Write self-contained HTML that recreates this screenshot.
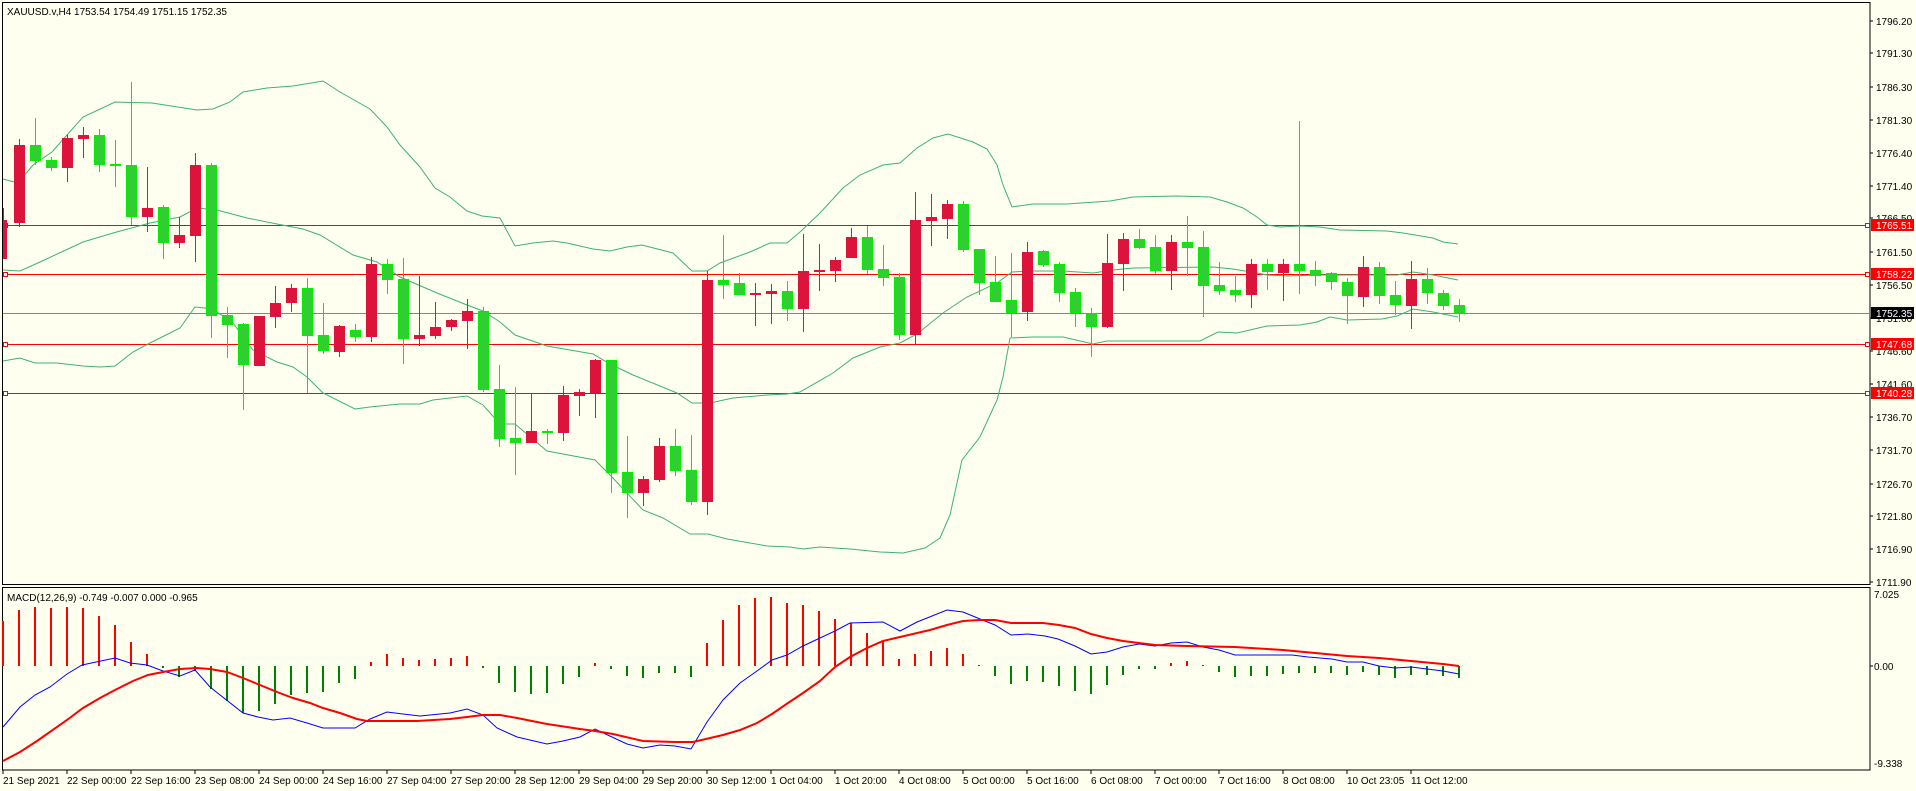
<!DOCTYPE html>
<html><head><meta charset="utf-8"><style>
html,body{margin:0;padding:0;background:#fffff0;}
svg{display:block;}
text{font-family:"Liberation Sans",sans-serif;font-size:10px;}
</style></head><body>
<svg width="1916" height="791" viewBox="0 0 1916 791" xmlns="http://www.w3.org/2000/svg" shape-rendering="crispEdges">
<rect width="1916" height="791" fill="#fffff0"/>
<!-- frames -->
<rect x="2.5" y="2.5" width="1867.5" height="582" fill="none" stroke="#000"/>
<rect x="2.5" y="587.5" width="1867.5" height="182.5" fill="none" stroke="#000"/>

<!-- horizontal lines -->
<line x1="3" y1="313.5" x2="1870" y2="313.5" stroke="#778899"/>
<g stroke="#ff0000">
<line x1="3" y1="225.5" x2="1870" y2="225.5"/>
<line x1="3" y1="274.5" x2="1870" y2="274.5"/>
<line x1="3" y1="344.5" x2="1870" y2="344.5"/>
<line x1="3" y1="393.5" x2="1870" y2="393.5"/>
<rect x="3.5" y="223.5" width="4" height="4" fill="#fff"/>
<rect x="3.5" y="272.5" width="4" height="4" fill="#fff"/>
<rect x="3.5" y="342.5" width="4" height="4" fill="#fff"/>
<rect x="3.5" y="391.5" width="4" height="4" fill="#fff"/>
<rect x="1865.5" y="223.5" width="4" height="4" fill="#fff"/>
<rect x="1865.5" y="272.5" width="4" height="4" fill="#fff"/>
<rect x="1865.5" y="342.5" width="4" height="4" fill="#fff"/>
<rect x="1865.5" y="391.5" width="4" height="4" fill="#fff"/>
</g>

<!-- bollinger bands -->
<g fill="none" stroke="#3cb371" stroke-width="1" shape-rendering="auto">
<polyline points="3,179 18,183 33,165 52,152 67,135 83,117 115,102 152,103 197,110 213,109 230,102 243,92 267,88 293,86 323,81 340,92 370,109 387,127 400,145 420,167 435,188 450,197 467,211 482,216 500,218 515,246 533,243 553,241 567,243 593,249 610,251 627,247 642,245 673,253 692,271 707,271 720,263 750,252 770,243 787,243 800,232 820,213 843,188 860,175 883,165 900,163 917,148 933,138 948,134 973,142 987,149 997,165 1003,185 1012,207 1033,204 1067,204 1110,201 1133,197 1177,196 1210,197 1227,202 1243,208 1257,217 1267,225 1280,227 1300,226 1320,227 1340,230 1387,231 1403,233 1433,238 1443,242 1458,244"/>
<polyline points="3,270 20,271 40,262 83,242 113,233 150,223 180,217 197,208 217,210 247,218 277,224 303,229 320,235 353,255 377,262 400,277 437,293 467,305 483,311 500,322 515,335 547,346 593,354 610,364 633,375 677,393 692,403 710,403 733,398 767,395 787,394 800,392 833,373 853,358 880,347 900,343 917,334 943,313 967,297 997,283 1012,272 1033,271 1063,271 1093,273 1113,270 1133,268 1213,267 1233,269 1257,273 1267,275 1287,276 1320,275 1397,275 1413,272 1433,275 1458,280"/>
<polyline points="3,361 20,358 35,363 57,363 83,366 100,367 115,366 133,352 150,343 180,328 195,307 205,308 217,312 233,323 253,350 277,362 293,367 307,377 323,393 355,409 370,407 400,404 420,404 433,400 467,396 483,405 500,424 515,424 547,451 595,460 612,477 643,510 663,518 690,534 708,534 727,539 767,546 790,547 803,549 820,547 850,549 880,552 903,553 925,548 940,538 950,515 962,460 980,437 997,400 1003,377 1010,338 1033,337 1063,337 1093,344 1107,341 1200,341 1218,332 1237,333 1267,326 1300,325 1317,322 1330,317 1347,320 1382,319 1397,316 1413,309 1433,312 1458,317"/>
</g>

<!-- candles: red -->
<g stroke="#dc143c" fill="#dc143c">
<line x1="3.5" y1="208" x2="3.5" y2="259"/><rect x="3" y="220" width="4" height="39" stroke="none"/>
<line x1="19.5" y1="139" x2="19.5" y2="227"/><rect x="14" y="145" width="11" height="78" stroke="none"/>
<line x1="67.5" y1="135" x2="67.5" y2="182"/><rect x="62" y="138" width="11" height="30" stroke="none"/>
<line x1="83.5" y1="127" x2="83.5" y2="158"/><rect x="78" y="135" width="11" height="4" stroke="none"/>
<line x1="147.5" y1="167" x2="147.5" y2="232"/><rect x="142" y="208" width="11" height="9" stroke="none"/>
<line x1="179.5" y1="217" x2="179.5" y2="248"/><rect x="174" y="235" width="11" height="8" stroke="none"/>
<line x1="195.5" y1="153" x2="195.5" y2="262"/><rect x="190" y="165" width="11" height="71" stroke="none"/>
<line x1="259.5" y1="316" x2="259.5" y2="366"/><rect x="254" y="316" width="11" height="50" stroke="none"/>
<line x1="275.5" y1="286" x2="275.5" y2="328"/><rect x="270" y="303" width="11" height="14" stroke="none"/>
<line x1="291.5" y1="284" x2="291.5" y2="312"/><rect x="286" y="288" width="11" height="15" stroke="none"/>
<line x1="339.5" y1="325" x2="339.5" y2="357"/><rect x="334" y="326" width="11" height="26" stroke="none"/>
<line x1="371.5" y1="257" x2="371.5" y2="342"/><rect x="366" y="264" width="11" height="73" stroke="none"/>
<line x1="419.5" y1="276" x2="419.5" y2="346"/><rect x="414" y="335" width="11" height="4" stroke="none"/>
<line x1="435.5" y1="302" x2="435.5" y2="339"/><rect x="430" y="327" width="11" height="9" stroke="none"/>
<line x1="451.5" y1="319" x2="451.5" y2="331"/><rect x="446" y="320" width="11" height="7" stroke="none"/>
<line x1="467.5" y1="299" x2="467.5" y2="349"/><rect x="462" y="311" width="11" height="10" stroke="none"/>
<line x1="531.5" y1="393" x2="531.5" y2="443"/><rect x="526" y="431" width="11" height="12" stroke="none"/>
<line x1="563.5" y1="386" x2="563.5" y2="441"/><rect x="558" y="395" width="11" height="38" stroke="none"/>
<line x1="579.5" y1="389" x2="579.5" y2="416"/><rect x="574" y="392" width="11" height="4" stroke="none"/>
<line x1="595.5" y1="359" x2="595.5" y2="418"/><rect x="590" y="360" width="11" height="33" stroke="none"/>
<line x1="643.5" y1="476" x2="643.5" y2="506"/><rect x="638" y="479" width="11" height="14" stroke="none"/>
<line x1="659.5" y1="438" x2="659.5" y2="482"/><rect x="654" y="446" width="11" height="34" stroke="none"/>
<line x1="707.5" y1="271" x2="707.5" y2="515"/><rect x="702" y="280" width="11" height="222" stroke="none"/>
<line x1="755.5" y1="283" x2="755.5" y2="326"/><rect x="750" y="293" width="11" height="2" stroke="none"/>
<line x1="771.5" y1="284" x2="771.5" y2="324"/><rect x="766" y="291" width="11" height="3" stroke="none"/>
<line x1="803.5" y1="234" x2="803.5" y2="332"/><rect x="798" y="271" width="11" height="38" stroke="none"/>
<line x1="819.5" y1="244" x2="819.5" y2="291"/><rect x="814" y="270" width="11" height="2" stroke="none"/>
<line x1="835.5" y1="257" x2="835.5" y2="282"/><rect x="830" y="260" width="11" height="11" stroke="none"/>
<line x1="851.5" y1="228" x2="851.5" y2="258"/><rect x="846" y="237" width="11" height="21" stroke="none"/>
<line x1="915.5" y1="192" x2="915.5" y2="344"/><rect x="910" y="220" width="11" height="115" stroke="none"/>
<line x1="931.5" y1="194" x2="931.5" y2="246"/><rect x="926" y="217" width="11" height="4" stroke="none"/>
<line x1="947.5" y1="200" x2="947.5" y2="239"/><rect x="942" y="204" width="11" height="15" stroke="none"/>
<line x1="1027.5" y1="242" x2="1027.5" y2="321"/><rect x="1022" y="252" width="11" height="60" stroke="none"/>
<line x1="1107.5" y1="234" x2="1107.5" y2="328"/><rect x="1102" y="263" width="11" height="64" stroke="none"/>
<line x1="1123.5" y1="233" x2="1123.5" y2="291"/><rect x="1118" y="239" width="11" height="25" stroke="none"/>
<line x1="1171.5" y1="235" x2="1171.5" y2="290"/><rect x="1166" y="242" width="11" height="29" stroke="none"/>
<line x1="1251.5" y1="259" x2="1251.5" y2="308"/><rect x="1246" y="264" width="11" height="31" stroke="none"/>
<line x1="1283.5" y1="259" x2="1283.5" y2="301"/><rect x="1278" y="264" width="11" height="9" stroke="none"/>
<line x1="1363.5" y1="256" x2="1363.5" y2="307"/><rect x="1358" y="267" width="11" height="30" stroke="none"/>
<line x1="1411.5" y1="261" x2="1411.5" y2="329"/><rect x="1406" y="279" width="11" height="27" stroke="none"/>
</g>
<!-- candles: green -->
<g stroke="#00ee00">
<g>
<line x1="35.5" y1="118" x2="35.5" y2="165"/>
<line x1="51.5" y1="157" x2="51.5" y2="171"/>
<line x1="99.5" y1="129" x2="99.5" y2="172"/>
<line x1="115.5" y1="140" x2="115.5" y2="187"/>
<line x1="131.5" y1="82" x2="131.5" y2="225"/>
<line x1="163.5" y1="205" x2="163.5" y2="259"/>
<line x1="211.5" y1="163" x2="211.5" y2="338"/>
<line x1="227.5" y1="307" x2="227.5" y2="358"/>
<line x1="243.5" y1="323" x2="243.5" y2="410"/>
<line x1="307.5" y1="278" x2="307.5" y2="393"/>
<line x1="323.5" y1="303" x2="323.5" y2="354"/>
<line x1="355.5" y1="324" x2="355.5" y2="342"/>
<line x1="387.5" y1="259" x2="387.5" y2="294"/>
<line x1="403.5" y1="258" x2="403.5" y2="364"/>
<line x1="483.5" y1="307" x2="483.5" y2="392"/>
<line x1="499.5" y1="365" x2="499.5" y2="447"/>
<line x1="515.5" y1="387" x2="515.5" y2="475"/>
<line x1="547.5" y1="429" x2="547.5" y2="444"/>
<line x1="611.5" y1="360" x2="611.5" y2="493"/>
<line x1="627.5" y1="436" x2="627.5" y2="518"/>
<line x1="675.5" y1="429" x2="675.5" y2="476"/>
<line x1="691.5" y1="435" x2="691.5" y2="505"/>
<line x1="723.5" y1="235" x2="723.5" y2="299"/>
<line x1="739.5" y1="273" x2="739.5" y2="295"/>
<line x1="787.5" y1="281" x2="787.5" y2="321"/>
<line x1="867.5" y1="226" x2="867.5" y2="274"/>
<line x1="883.5" y1="245" x2="883.5" y2="286"/>
<line x1="899.5" y1="273" x2="899.5" y2="340"/>
<line x1="963.5" y1="201" x2="963.5" y2="252"/>
<line x1="979.5" y1="249" x2="979.5" y2="295"/>
<line x1="995.5" y1="256" x2="995.5" y2="302"/>
<line x1="1011.5" y1="253" x2="1011.5" y2="337"/>
<line x1="1043.5" y1="250" x2="1043.5" y2="267"/>
<line x1="1059.5" y1="262" x2="1059.5" y2="302"/>
<line x1="1075.5" y1="288" x2="1075.5" y2="327"/>
<line x1="1091.5" y1="308" x2="1091.5" y2="357"/>
<line x1="1139.5" y1="229" x2="1139.5" y2="249"/>
<line x1="1155.5" y1="235" x2="1155.5" y2="274"/>
<line x1="1187.5" y1="216" x2="1187.5" y2="276"/>
<line x1="1203.5" y1="231" x2="1203.5" y2="317"/>
<line x1="1219.5" y1="262" x2="1219.5" y2="295"/>
<line x1="1235.5" y1="276" x2="1235.5" y2="302"/>
<line x1="1267.5" y1="259" x2="1267.5" y2="290"/>
<line x1="1299.5" y1="121" x2="1299.5" y2="294"/>
<line x1="1315.5" y1="261" x2="1315.5" y2="286"/>
<line x1="1331.5" y1="272" x2="1331.5" y2="290"/>
<line x1="1347.5" y1="278" x2="1347.5" y2="324"/>
<line x1="1379.5" y1="262" x2="1379.5" y2="304"/>
<line x1="1395.5" y1="281" x2="1395.5" y2="315"/>
<line x1="1427.5" y1="268" x2="1427.5" y2="304"/>
<line x1="1443.5" y1="290" x2="1443.5" y2="310"/>
<line x1="1459.5" y1="299" x2="1459.5" y2="322"/>
</g>
<g fill="#32cd32">
<rect x="30.5" y="145.5" width="10" height="15"/>
<rect x="46.5" y="160.5" width="10" height="7"/>
<rect x="94.5" y="135.5" width="10" height="29"/>
<rect x="110.5" y="164.5" width="10" height="1"/>
<rect x="126.5" y="165.5" width="10" height="51"/>
<rect x="158.5" y="207.5" width="10" height="35"/>
<rect x="206.5" y="165.5" width="10" height="150"/>
<rect x="222.5" y="315.5" width="10" height="9"/>
<rect x="238.5" y="324.5" width="10" height="40"/>
<rect x="302.5" y="288.5" width="10" height="47"/>
<rect x="318.5" y="335.5" width="10" height="15"/>
<rect x="350.5" y="330.5" width="10" height="6"/>
<rect x="382.5" y="264.5" width="10" height="15"/>
<rect x="398.5" y="279.5" width="10" height="59"/>
<rect x="478.5" y="311.5" width="10" height="78"/>
<rect x="494.5" y="389.5" width="10" height="49"/>
<rect x="510.5" y="438.5" width="10" height="4"/>
<rect x="542.5" y="431.5" width="10" height="1"/>
<rect x="606.5" y="360.5" width="10" height="112"/>
<rect x="622.5" y="472.5" width="10" height="20"/>
<rect x="670.5" y="446.5" width="10" height="24"/>
<rect x="686.5" y="470.5" width="10" height="31"/>
<rect x="718.5" y="280.5" width="10" height="4"/>
<rect x="734.5" y="283.5" width="10" height="11"/>
<rect x="782.5" y="291.5" width="10" height="17"/>
<rect x="862.5" y="237.5" width="10" height="32"/>
<rect x="878.5" y="269.5" width="10" height="8"/>
<rect x="894.5" y="277.5" width="10" height="57"/>
<rect x="958.5" y="204.5" width="10" height="45"/>
<rect x="974.5" y="249.5" width="10" height="33"/>
<rect x="990.5" y="282.5" width="10" height="19"/>
<rect x="1006.5" y="300.5" width="10" height="12"/>
<rect x="1038.5" y="251.5" width="10" height="13"/>
<rect x="1054.5" y="264.5" width="10" height="28"/>
<rect x="1070.5" y="292.5" width="10" height="20"/>
<rect x="1086.5" y="313.5" width="10" height="13"/>
<rect x="1134.5" y="239.5" width="10" height="8"/>
<rect x="1150.5" y="247.5" width="10" height="23"/>
<rect x="1182.5" y="242.5" width="10" height="5"/>
<rect x="1198.5" y="247.5" width="10" height="38"/>
<rect x="1214.5" y="285.5" width="10" height="5"/>
<rect x="1230.5" y="290.5" width="10" height="4"/>
<rect x="1262.5" y="264.5" width="10" height="7"/>
<rect x="1294.5" y="264.5" width="10" height="6"/>
<rect x="1310.5" y="270.5" width="10" height="5"/>
<rect x="1326.5" y="273.5" width="10" height="8"/>
<rect x="1342.5" y="282.5" width="10" height="13"/>
<rect x="1374.5" y="267.5" width="10" height="28"/>
<rect x="1390.5" y="295.5" width="10" height="9"/>
<rect x="1422.5" y="279.5" width="10" height="13"/>
<rect x="1438.5" y="293.5" width="10" height="12"/>
<rect x="1454.5" y="305.5" width="10" height="8"/>
</g>
</g>

<!-- MACD histogram -->
<g fill="#ff0000">
<rect x="2" y="621" width="2" height="45"/><rect x="18" y="610" width="2" height="56"/><rect x="34" y="607" width="2" height="59"/><rect x="50" y="608" width="2" height="58"/><rect x="66" y="607" width="2" height="59"/><rect x="82" y="608" width="2" height="58"/><rect x="98" y="616" width="2" height="50"/><rect x="114" y="625" width="2" height="41"/><rect x="130" y="642" width="2" height="24"/><rect x="146" y="654" width="2" height="12"/>
<rect x="370" y="662" width="2" height="4"/><rect x="386" y="654" width="2" height="12"/><rect x="402" y="658" width="2" height="8"/><rect x="418" y="660" width="2" height="6"/><rect x="434" y="659" width="2" height="7"/><rect x="450" y="658" width="2" height="8"/><rect x="466" y="656" width="2" height="10"/>
<rect x="594" y="663" width="2" height="3"/>
<rect x="706" y="643" width="2" height="23"/><rect x="722" y="620" width="2" height="46"/><rect x="738" y="605" width="2" height="61"/><rect x="754" y="598" width="2" height="68"/><rect x="770" y="597" width="2" height="69"/><rect x="786" y="603" width="2" height="63"/><rect x="802" y="605" width="2" height="61"/><rect x="818" y="611" width="2" height="55"/><rect x="834" y="619" width="2" height="47"/><rect x="850" y="623" width="2" height="43"/><rect x="866" y="633" width="2" height="33"/><rect x="882" y="641" width="2" height="25"/><rect x="898" y="659" width="2" height="7"/><rect x="914" y="654" width="2" height="12"/><rect x="930" y="651" width="2" height="15"/><rect x="946" y="648" width="2" height="18"/><rect x="962" y="654" width="2" height="12"/><rect x="978" y="665" width="2" height="1"/>
<rect x="1170" y="663" width="2" height="3"/><rect x="1186" y="661" width="2" height="5"/><rect x="1202" y="665" width="2" height="1"/>
</g>
<g fill="#008000">
<rect x="162" y="666" width="2" height="2"/><rect x="178" y="666" width="2" height="11"/><rect x="194" y="666" width="2" height="5"/><rect x="210" y="666" width="2" height="23"/><rect x="226" y="666" width="2" height="35"/><rect x="242" y="666" width="2" height="47"/><rect x="258" y="666" width="2" height="45"/><rect x="274" y="666" width="2" height="38"/><rect x="290" y="666" width="2" height="29"/><rect x="306" y="666" width="2" height="27"/><rect x="322" y="666" width="2" height="26"/><rect x="338" y="666" width="2" height="17"/><rect x="354" y="666" width="2" height="13"/>
<rect x="482" y="666" width="2" height="2"/><rect x="498" y="666" width="2" height="17"/><rect x="514" y="666" width="2" height="26"/><rect x="530" y="666" width="2" height="28"/><rect x="546" y="666" width="2" height="27"/><rect x="562" y="666" width="2" height="18"/><rect x="578" y="666" width="2" height="11"/>
<rect x="610" y="666" width="2" height="3"/><rect x="626" y="666" width="2" height="10"/><rect x="642" y="666" width="2" height="12"/><rect x="658" y="666" width="2" height="7"/><rect x="674" y="666" width="2" height="7"/><rect x="690" y="666" width="2" height="11"/>
<rect x="994" y="666" width="2" height="10"/><rect x="1010" y="666" width="2" height="18"/><rect x="1026" y="666" width="2" height="15"/><rect x="1042" y="666" width="2" height="16"/><rect x="1058" y="666" width="2" height="20"/><rect x="1074" y="666" width="2" height="25"/><rect x="1090" y="666" width="2" height="28"/><rect x="1106" y="666" width="2" height="19"/><rect x="1122" y="666" width="2" height="9"/><rect x="1138" y="666" width="2" height="3"/><rect x="1154" y="666" width="2" height="3"/>
<rect x="1218" y="666" width="2" height="6"/><rect x="1234" y="666" width="2" height="11"/><rect x="1250" y="666" width="2" height="10"/><rect x="1266" y="666" width="2" height="10"/><rect x="1282" y="666" width="2" height="8"/><rect x="1298" y="666" width="2" height="7"/><rect x="1314" y="666" width="2" height="7"/><rect x="1330" y="666" width="2" height="7"/><rect x="1346" y="666" width="2" height="9"/><rect x="1362" y="666" width="2" height="6"/><rect x="1378" y="666" width="2" height="9"/><rect x="1394" y="666" width="2" height="12"/><rect x="1410" y="666" width="2" height="9"/><rect x="1426" y="666" width="2" height="9"/><rect x="1442" y="666" width="2" height="10"/><rect x="1458" y="666" width="2" height="12"/>
</g>
<g fill="none" shape-rendering="auto">
<polyline stroke="#0000ff" stroke-width="1" points="3,727 20,707 35,695 50,687 67,674 82,665 115,658 130,663 147,665 163,671 180,676 195,670 210,687 243,713 258,717 273,720 290,718 307,723 323,728 355,728 370,719 387,712 403,714 420,716 450,713 467,709 483,715 497,728 517,737 547,744 563,741 580,737 595,729 612,737 627,744 643,748 660,745 675,746 691,749 707,722 723,700 740,683 757,671 772,660 787,655 803,646 820,638 835,631 850,623 883,622 900,631 917,622 947,610 963,612 980,619 995,625 1011,635 1028,634 1045,636 1058,639 1075,646 1091,654 1107,652 1123,647 1139,644 1155,646 1171,643 1187,642 1203,647 1219,650 1235,655 1292,655 1308,657 1332,659 1347,662 1363,662 1379,666 1395,668 1411,667 1427,669 1443,671 1459,674"/>
<polyline stroke="#ff0000" stroke-width="2" points="3,761 20,752 37,741 67,720 83,708 100,698 115,690 133,681 148,675 163,672 180,669 197,668 210,669 227,672 243,678 260,685 277,692 293,698 310,703 323,708 340,713 357,719 367,721 417,721 450,719 467,717 483,715 500,715 517,718 547,724 580,729 595,731 613,734 643,741 675,742 693,742 723,735 740,730 757,723 772,714 788,703 803,693 820,681 835,667 850,657 867,648 883,641 900,637 930,630 947,625 963,621 980,620 995,620 1011,623 1043,623 1059,625 1075,628 1091,634 1107,638 1123,641 1139,643 1155,645 1187,646 1235,647 1251,648 1283,650 1315,653 1347,656 1379,658 1411,661 1443,664 1459,666"/>
</g>

<!-- titles -->
<text x="7" y="15">XAUUSD.v,H4  1753.54 1754.49 1751.15 1752.35</text>
<text x="7" y="601">MACD(12,26,9) -0.749 -0.007 0.000 -0.965</text>

<!-- right axis ticks & labels -->
<g stroke="#000">
<line x1="1870" y1="21" x2="1873" y2="21"/><line x1="1870" y1="53" x2="1873" y2="53"/><line x1="1870" y1="87" x2="1873" y2="87"/><line x1="1870" y1="120" x2="1873" y2="120"/><line x1="1870" y1="153" x2="1873" y2="153"/><line x1="1870" y1="186" x2="1873" y2="186"/><line x1="1870" y1="218" x2="1873" y2="218"/><line x1="1870" y1="252" x2="1873" y2="252"/><line x1="1870" y1="285" x2="1873" y2="285"/><line x1="1870" y1="318" x2="1873" y2="318"/><line x1="1870" y1="351" x2="1873" y2="351"/><line x1="1870" y1="384" x2="1873" y2="384"/><line x1="1870" y1="417" x2="1873" y2="417"/><line x1="1870" y1="450" x2="1873" y2="450"/><line x1="1870" y1="484" x2="1873" y2="484"/><line x1="1870" y1="516" x2="1873" y2="516"/><line x1="1870" y1="549" x2="1873" y2="549"/><line x1="1870" y1="582" x2="1873" y2="582"/>
<line x1="1870" y1="666" x2="1873" y2="666"/>
</g>
<g fill="#000">
<text x="1876" y="25">1796.20</text><text x="1876" y="57">1791.30</text><text x="1876" y="91">1786.30</text><text x="1876" y="124">1781.30</text><text x="1876" y="157">1776.40</text><text x="1876" y="190">1771.40</text><text x="1876" y="222">1766.50</text><text x="1876" y="256">1761.50</text><text x="1876" y="289">1756.50</text><text x="1876" y="322">1751.60</text><text x="1876" y="355">1746.60</text><text x="1876" y="388">1741.60</text><text x="1876" y="421">1736.70</text><text x="1876" y="454">1731.70</text><text x="1876" y="488">1726.70</text><text x="1876" y="520">1721.80</text><text x="1876" y="553">1716.90</text><text x="1876" y="586">1711.90</text>
<text x="1874" y="598">7.025</text><text x="1874" y="670">0.00</text><text x="1874" y="767">-9.338</text>
</g>
<rect x="1871" y="219" width="43" height="12" fill="#ff0000"/><text x="1876" y="229" fill="#fff">1765.51</text>
<rect x="1871" y="268" width="43" height="12" fill="#ff0000"/><text x="1876" y="278" fill="#fff">1758.22</text>
<rect x="1871" y="307" width="43" height="12" fill="#000"/><text x="1876" y="317" fill="#fff">1752.35</text>
<rect x="1871" y="338" width="43" height="12" fill="#ff0000"/><text x="1876" y="348" fill="#fff">1747.68</text>
<rect x="1871" y="387" width="43" height="12" fill="#ff0000"/><text x="1876" y="397" fill="#fff">1740.28</text>

<!-- time axis -->
<g stroke="#000">
<line x1="3" y1="770" x2="3" y2="774"/><line x1="67" y1="770" x2="67" y2="774"/><line x1="131" y1="770" x2="131" y2="774"/><line x1="195" y1="770" x2="195" y2="774"/><line x1="259" y1="770" x2="259" y2="774"/><line x1="323" y1="770" x2="323" y2="774"/><line x1="387" y1="770" x2="387" y2="774"/><line x1="451" y1="770" x2="451" y2="774"/><line x1="515" y1="770" x2="515" y2="774"/><line x1="579" y1="770" x2="579" y2="774"/><line x1="643" y1="770" x2="643" y2="774"/><line x1="707" y1="770" x2="707" y2="774"/><line x1="771" y1="770" x2="771" y2="774"/><line x1="835" y1="770" x2="835" y2="774"/><line x1="899" y1="770" x2="899" y2="774"/><line x1="963" y1="770" x2="963" y2="774"/><line x1="1027" y1="770" x2="1027" y2="774"/><line x1="1091" y1="770" x2="1091" y2="774"/><line x1="1155" y1="770" x2="1155" y2="774"/><line x1="1219" y1="770" x2="1219" y2="774"/><line x1="1283" y1="770" x2="1283" y2="774"/><line x1="1347" y1="770" x2="1347" y2="774"/><line x1="1411" y1="770" x2="1411" y2="774"/>
</g>
<g fill="#000">
<text x="3" y="784">21 Sep 2021</text><text x="67" y="784">22 Sep 00:00</text><text x="131" y="784">22 Sep 16:00</text><text x="195" y="784">23 Sep 08:00</text><text x="259" y="784">24 Sep 00:00</text><text x="323" y="784">24 Sep 16:00</text><text x="387" y="784">27 Sep 04:00</text><text x="451" y="784">27 Sep 20:00</text><text x="515" y="784">28 Sep 12:00</text><text x="579" y="784">29 Sep 04:00</text><text x="643" y="784">29 Sep 20:00</text><text x="707" y="784">30 Sep 12:00</text><text x="771" y="784">1 Oct 04:00</text><text x="835" y="784">1 Oct 20:00</text><text x="899" y="784">4 Oct 08:00</text><text x="963" y="784">5 Oct 00:00</text><text x="1027" y="784">5 Oct 16:00</text><text x="1091" y="784">6 Oct 08:00</text><text x="1155" y="784">7 Oct 00:00</text><text x="1219" y="784">7 Oct 16:00</text><text x="1283" y="784">8 Oct 08:00</text><text x="1347" y="784">10 Oct 23:05</text><text x="1411" y="784">11 Oct 12:00</text>
</g>
</svg>
</body></html>
